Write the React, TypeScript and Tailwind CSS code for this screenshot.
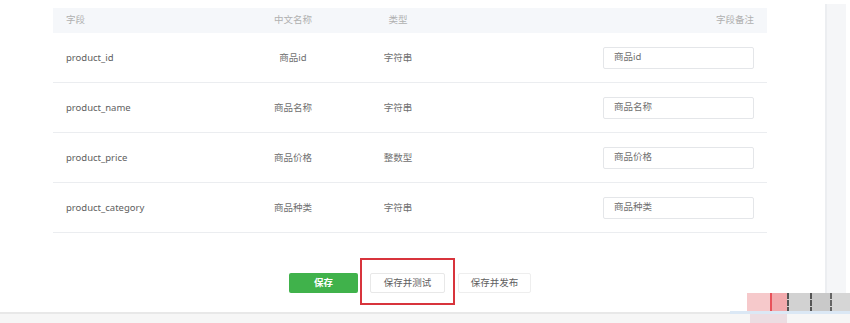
import { Fragment } from "react";

type Field = { name: string; label: string; type: string };

const fields: Field[] = [
  { name: "product_id", label: "商品id", type: "字符串" },
  { name: "product_name", label: "商品名称", type: "字符串" },
  { name: "product_price", label: "商品价格", type: "整数型" },
  { name: "product_category", label: "商品种类", type: "字符串" },
];

export default function App() {
  return (
    <div
      className="relative h-[323px] w-[850px] overflow-hidden bg-white text-[9.5px] text-[#606060]"
      style={{ fontFamily: '"Noto Sans", "Noto Sans CJK SC", sans-serif' }}
    >
      <div className="flex h-[312px]">
        {/* Main */}
        <main className="w-[825px] pl-[53px] pr-[58px] pt-[8px]">
          <div className="grid grid-cols-[190px_100px_110px_1fr]">
            {/* Header */}
            <div className="flex h-[25px] items-center bg-[#f5f7fa] pl-[13px] text-[#b0b0b0]">字段</div>
            <div className="flex h-[25px] items-center justify-center bg-[#f5f7fa] text-[#b0b0b0]">中文名称</div>
            <div className="flex h-[25px] items-center justify-center bg-[#f5f7fa] text-[#b0b0b0]">类型</div>
            <div className="flex h-[25px] items-center justify-end bg-[#f5f7fa] pr-[13px] text-[#b0b0b0]">字段备注</div>

            {fields.map((f) => (
              <Fragment key={f.name}>
                <div className="flex h-[50px] items-center border-b border-[#ebedf0] pl-[13px] pt-[1px]">{f.name}</div>
                <div className="flex h-[50px] items-center justify-center border-b border-[#ebedf0] pt-[1px] text-[#707070]">{f.label}</div>
                <div className="flex h-[50px] items-center justify-center border-b border-[#ebedf0] pt-[1px] text-[#707070]">{f.type}</div>
                <div className="flex h-[50px] items-center justify-end border-b border-[#ebedf0] pr-[13px]">
                  <div className="flex h-[22px] w-[151px] items-center rounded-[2px] border border-[#e4e6e9] pl-[10px] text-[#707070]">
                    {f.label}
                  </div>
                </div>
              </Fragment>
            ))}
          </div>

          {/* Actions */}
          <div className="mt-[40px] flex justify-center gap-[12px]">
            <button className="h-[20px] w-[69px] rounded-[2px] bg-[#40b24b] text-[9.5px] font-bold text-white">保存</button>
            <div className="relative">
              <button className="h-[20px] w-[75px] rounded-[2px] border border-[#e8e8e8] bg-white text-[9.5px] text-[#606060]">
                保存并测试
              </button>
              <div className="pointer-events-none absolute -bottom-[12px] -left-[10px] -right-[10px] -top-[15px] border-2 border-[#d8343c]" />
            </div>
            <button className="ml-[1px] h-[20px] w-[73px] rounded-[2px] border border-[#eeeeee] bg-white text-[9.5px] text-[#606060]">
              保存并发布
            </button>
          </div>
        </main>

        {/* Side strip */}
        <aside className="mt-[4px] w-[21px] border-l-2 border-[#eceef1] bg-[#f5f6f8]" />
      </div>

      {/* Bottom band */}
      <div className="h-[11px] border-t-2 border-[#e8e8e8] bg-[#f6f6f6]" />

      {/* Overlay residue, bottom right */}
      <div className="pointer-events-none absolute left-[747px] top-[293px] flex h-[20px]">
        <div className="w-[23px] bg-[#f6c9cb]" />
        <div className="w-[17px] border-l-2 border-[#e8525a] bg-[#f2aaad]" />
        <div className="w-[23px] border-l-2 border-dashed border-[#555] bg-[#d2d2d2]" />
        <div className="w-[20px] border-l-2 border-dashed border-[#555] bg-[#c9c9c9]" />
        <div className="w-[20px] border-l-2 border-dashed border-[#666] bg-[#d6d6d6]" />
      </div>
      <div className="pointer-events-none absolute left-[730px] top-[311px] h-[3px] w-[120px] bg-[#dbe8f5]" />
      <div className="pointer-events-none absolute left-[750px] top-[314px] h-[9px] w-[37px] bg-[#ecdde2]" />
    </div>
  );
}
